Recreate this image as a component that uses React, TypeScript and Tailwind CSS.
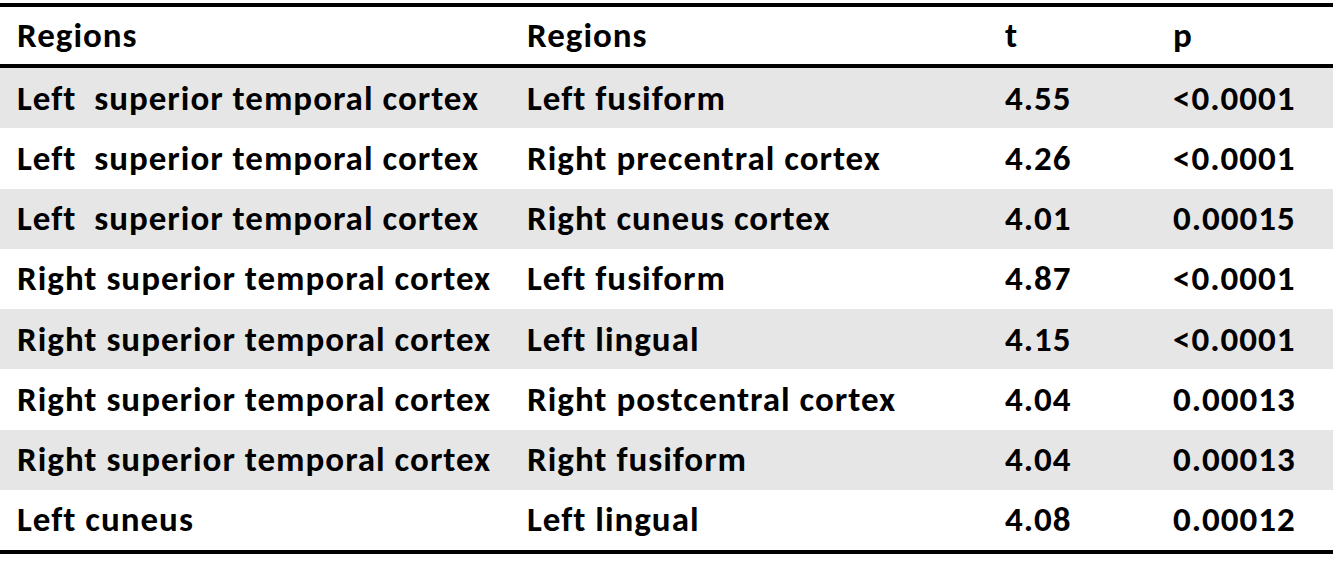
const rows: [string, string, string, string][] = [
  ["Left\u00a0 superior temporal cortex", "Left fusiform", "4.55", "<0.0001"],
  ["Left\u00a0 superior temporal cortex", "Right precentral cortex", "4.26", "<0.0001"],
  ["Left\u00a0 superior temporal cortex", "Right cuneus cortex", "4.01", "0.00015"],
  ["Right superior temporal cortex", "Left fusiform", "4.87", "<0.0001"],
  ["Right superior temporal cortex", "Left lingual", "4.15", "<0.0001"],
  ["Right superior temporal cortex", "Right postcentral cortex", "4.04", "0.00013"],
  ["Right superior temporal cortex", "Right fusiform", "4.04", "0.00013"],
  ["Left cuneus", "Left lingual", "4.08", "0.00012"],
];

const cols = "grid grid-cols-[510px_478px_168px_1fr] items-center";

export default function App() {
  return (
    <div
      className="w-[1335px] h-[572px] bg-white pt-[3px] text-black font-bold text-[35px] tracking-[1px] leading-none"
      style={{ fontFamily: "Carlito, Calibri, Lato, sans-serif" }}
    >
      <div className="w-[1333px] border-t-[4px] border-b-[4px] border-black">
        <div className={`${cols} h-[61px] border-b-[4px] border-black pl-[17px]`}>
          <div>Regions</div>
          <div>Regions</div>
          <div>t</div>
          <div>p</div>
        </div>
        {rows.map((r, i) => (
          <div
            key={i}
            className={`${cols} h-[60.25px] pl-[17px] ${i % 2 === 0 ? "bg-[#e6e6e6]" : "bg-white"}`}
          >
            <div className="whitespace-pre">{r[0]}</div>
            <div>{r[1]}</div>
            <div>{r[2]}</div>
            <div>{r[3]}</div>
          </div>
        ))}
      </div>
    </div>
  );
}
